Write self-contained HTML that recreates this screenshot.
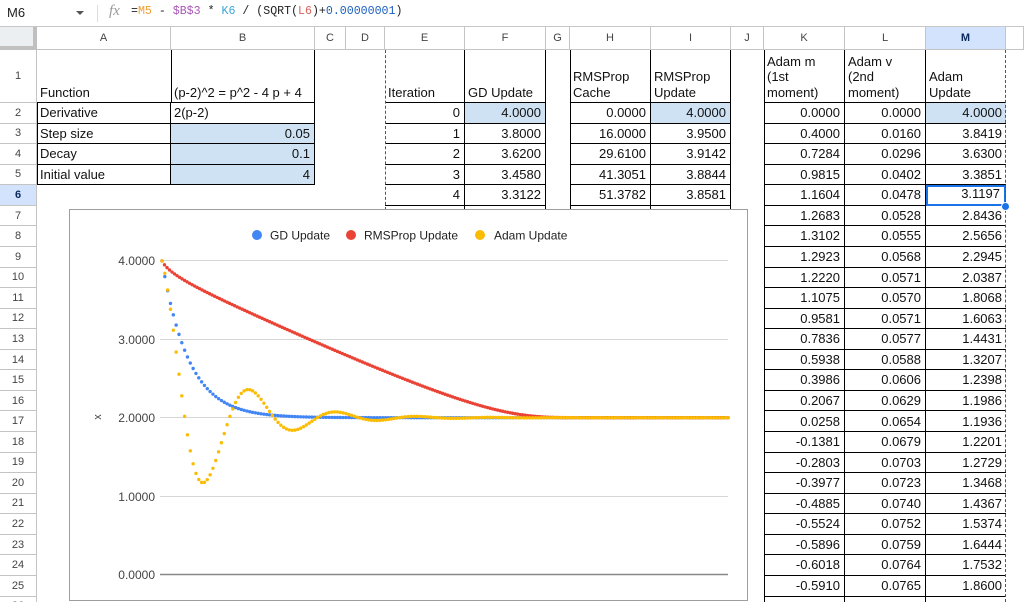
<!DOCTYPE html>
<html><head><meta charset="utf-8">
<style>
*{box-sizing:border-box;margin:0;padding:0}
html,body{width:1024px;height:602px;overflow:hidden}
body{background:#fff;font-family:"Liberation Sans",Arial,sans-serif;position:relative}
#fb{position:absolute;left:0;top:0;width:1024px;height:27px;border-bottom:1px solid #c7c7c7;background:#fff}
#g{position:absolute;left:0;top:27px;width:1024px;height:575px;overflow:hidden;display:grid;grid-template-columns:37px 134px 144px 31px 39px 80px 81px 24px 81px 80px 33px 81px 81px 80px 18px;grid-template-rows:23px 53px repeat(26,20.57px)}
.h{border-right:1px solid #c4c4c4;border-bottom:1px solid #c4c4c4;color:#444;font-size:11px;display:flex;align-items:center;justify-content:center;z-index:1;background:#fff}
.t{font-size:13px;color:#111;padding:0 3px 2px 3px;display:flex;align-items:flex-end;z-index:2;white-space:pre-line;line-height:15.5px;overflow:hidden}
.n{justify-content:flex-end;padding-right:4px}
.br{border-right:1px solid #000}.bb{border-bottom:1px solid #000}.bl{box-shadow:inset 1px 0 #000}
.bf{background:#cfe2f3}
.e{grid-column:6}.f{grid-column:7}.hh{grid-column:9}.i{grid-column:10}.k{grid-column:12}.l{grid-column:13}.m{grid-column:14}
</style></head><body>
<div id="fb">
<div style="position:absolute;left:7px;top:5px;font-size:13px;color:#222">M6</div>
<div style="position:absolute;left:76px;top:11px;width:0;height:0;border-left:4px solid transparent;border-right:4px solid transparent;border-top:4px solid #555"></div>
<div style="position:absolute;left:97px;top:5px;width:1px;height:17px;background:#ddd"></div>
<div style="position:absolute;left:109px;top:3px;font-family:'Liberation Serif',serif;font-style:italic;font-size:15px;color:#999">fx</div>
<div style="position:absolute;left:131px;top:5px;font-family:'Liberation Mono',monospace;font-size:11.6px;color:#222;white-space:pre">=<span style="color:#f0a030">M5</span> - <span style="color:#a855b5">$B$3</span> * <span style="color:#3ba7d6">K6</span> / (SQRT(<span style="color:#d8605a">L6</span>)+<span style="color:#1a5fc0">0.00000001</span>)</div>
</div>
<div id="g">
<div class="h" style="grid-area:1/1;background:#eceff1;border-right:4px solid #c0c0c0;border-bottom:4px solid #c0c0c0"></div>
<div class="h" style="grid-area:1/2">A</div><div class="h" style="grid-area:1/3">B</div><div class="h" style="grid-area:1/4">C</div><div class="h" style="grid-area:1/5">D</div><div class="h" style="grid-area:1/6">E</div><div class="h" style="grid-area:1/7">F</div><div class="h" style="grid-area:1/8">G</div><div class="h" style="grid-area:1/9">H</div><div class="h" style="grid-area:1/10">I</div><div class="h" style="grid-area:1/11">J</div><div class="h" style="grid-area:1/12">K</div><div class="h" style="grid-area:1/13">L</div><div class="h" style="grid-area:1/14;background:#d3e3fd;font-weight:bold;color:#0b2a5c">M</div><div class="h" style="grid-area:1/15"></div>
<div class="h" style="grid-area:2/1">1</div><div class="h" style="grid-area:3/1">2</div><div class="h" style="grid-area:4/1">3</div><div class="h" style="grid-area:5/1">4</div><div class="h" style="grid-area:6/1">5</div><div class="h" style="grid-area:7/1;background:#d3e3fd;font-weight:bold;color:#0b2a5c">6</div><div class="h" style="grid-area:8/1">7</div><div class="h" style="grid-area:9/1">8</div><div class="h" style="grid-area:10/1">9</div><div class="h" style="grid-area:11/1">10</div><div class="h" style="grid-area:12/1">11</div><div class="h" style="grid-area:13/1">12</div><div class="h" style="grid-area:14/1">13</div><div class="h" style="grid-area:15/1">14</div><div class="h" style="grid-area:16/1">15</div><div class="h" style="grid-area:17/1">16</div><div class="h" style="grid-area:18/1">17</div><div class="h" style="grid-area:19/1">18</div><div class="h" style="grid-area:20/1">19</div><div class="h" style="grid-area:21/1">20</div><div class="h" style="grid-area:22/1">21</div><div class="h" style="grid-area:23/1">22</div><div class="h" style="grid-area:24/1">23</div><div class="h" style="grid-area:25/1">24</div><div class="h" style="grid-area:26/1">25</div><div class="h" style="grid-area:27/1">26</div>

<div class="t bb" style="grid-area:2/2">Function</div>
<div class="t bb br bl" style="grid-area:2/3">(p-2)^2 = p^2 - 4 p + 4</div>
<div class="t bb br bl" style="grid-area:3/2">Derivative</div><div class="t bb br" style="grid-area:3/3">2(p-2)</div>
<div class="t bb br bl" style="grid-area:4/2">Step size</div><div class="t n bb br bf" style="grid-area:4/3">0.05</div>
<div class="t bb br bl" style="grid-area:5/2">Decay</div><div class="t n bb br bf" style="grid-area:5/3">0.1</div>
<div class="t bb br bl" style="grid-area:6/2">Initial value</div><div class="t n bb br bf" style="grid-area:6/3">4</div>

<div class="t e bb br" style="grid-row:2">Iteration</div><div class="t f bb br" style="grid-row:2">GD Update</div>
<div class="t hh bb br bl" style="grid-row:2">RMSProp
Cache</div><div class="t i bb br" style="grid-row:2">RMSProp
Update</div>
<div class="t k bb br bl" style="grid-row:2">Adam m
(1st
moment)</div><div class="t l bb br" style="grid-row:2">Adam v
(2nd
moment)</div><div class="t m bb" style="grid-row:2">Adam
Update</div>

<div class="t n e bb br" style="grid-row:3">0</div><div class="t n f bb br bf" style="grid-row:3">4.0000</div><div class="t n hh bb br bl" style="grid-row:3">0.0000</div><div class="t n i bb br bf" style="grid-row:3">4.0000</div>
<div class="t n e bb br" style="grid-row:4">1</div><div class="t n f bb br" style="grid-row:4">3.8000</div><div class="t n hh bb br bl" style="grid-row:4">16.0000</div><div class="t n i bb br" style="grid-row:4">3.9500</div>
<div class="t n e bb br" style="grid-row:5">2</div><div class="t n f bb br" style="grid-row:5">3.6200</div><div class="t n hh bb br bl" style="grid-row:5">29.6100</div><div class="t n i bb br" style="grid-row:5">3.9142</div>
<div class="t n e bb br" style="grid-row:6">3</div><div class="t n f bb br" style="grid-row:6">3.4580</div><div class="t n hh bb br bl" style="grid-row:6">41.3051</div><div class="t n i bb br" style="grid-row:6">3.8844</div>
<div class="t n e bb br" style="grid-row:7">4</div><div class="t n f bb br" style="grid-row:7">3.3122</div><div class="t n hh bb br bl" style="grid-row:7">51.3782</div><div class="t n i bb br" style="grid-row:7">3.8581</div>
<div class="t e bb br" style="grid-row:8"></div><div class="t f bb br" style="grid-row:8"></div><div class="t hh bb br bl" style="grid-row:8"></div><div class="t i bb br" style="grid-row:8"></div>

<div class="t n k bb br bl" style="grid-row:3">0.0000</div><div class="t n l bb br" style="grid-row:3">0.0000</div><div class="t n m bb bf" style="grid-row:3">4.0000</div>
<div class="t n k bb br bl" style="grid-row:4">0.4000</div><div class="t n l bb br" style="grid-row:4">0.0160</div><div class="t n m bb" style="grid-row:4">3.8419</div>
<div class="t n k bb br bl" style="grid-row:5">0.7284</div><div class="t n l bb br" style="grid-row:5">0.0296</div><div class="t n m bb" style="grid-row:5">3.6300</div>
<div class="t n k bb br bl" style="grid-row:6">0.9815</div><div class="t n l bb br" style="grid-row:6">0.0402</div><div class="t n m bb" style="grid-row:6">3.3851</div>
<div class="t n k bb br bl" style="grid-row:7">1.1604</div><div class="t n l bb br" style="grid-row:7">0.0478</div><div class="t n m" style="grid-row:7;border:2px solid #1a73e8">3.1197</div>
<div class="t n k bb br bl" style="grid-row:8">1.2683</div><div class="t n l bb br" style="grid-row:8">0.0528</div><div class="t n m bb" style="grid-row:8">2.8436</div>
<div class="t n k bb br bl" style="grid-row:9">1.3102</div><div class="t n l bb br" style="grid-row:9">0.0555</div><div class="t n m bb" style="grid-row:9">2.5656</div>
<div class="t n k bb br bl" style="grid-row:10">1.2923</div><div class="t n l bb br" style="grid-row:10">0.0568</div><div class="t n m bb" style="grid-row:10">2.2945</div>
<div class="t n k bb br bl" style="grid-row:11">1.2220</div><div class="t n l bb br" style="grid-row:11">0.0571</div><div class="t n m bb" style="grid-row:11">2.0387</div>
<div class="t n k bb br bl" style="grid-row:12">1.1075</div><div class="t n l bb br" style="grid-row:12">0.0570</div><div class="t n m bb" style="grid-row:12">1.8068</div>
<div class="t n k bb br bl" style="grid-row:13">0.9581</div><div class="t n l bb br" style="grid-row:13">0.0571</div><div class="t n m bb" style="grid-row:13">1.6063</div>
<div class="t n k bb br bl" style="grid-row:14">0.7836</div><div class="t n l bb br" style="grid-row:14">0.0577</div><div class="t n m bb" style="grid-row:14">1.4431</div>
<div class="t n k bb br bl" style="grid-row:15">0.5938</div><div class="t n l bb br" style="grid-row:15">0.0588</div><div class="t n m bb" style="grid-row:15">1.3207</div>
<div class="t n k bb br bl" style="grid-row:16">0.3986</div><div class="t n l bb br" style="grid-row:16">0.0606</div><div class="t n m bb" style="grid-row:16">1.2398</div>
<div class="t n k bb br bl" style="grid-row:17">0.2067</div><div class="t n l bb br" style="grid-row:17">0.0629</div><div class="t n m bb" style="grid-row:17">1.1986</div>
<div class="t n k bb br bl" style="grid-row:18">0.0258</div><div class="t n l bb br" style="grid-row:18">0.0654</div><div class="t n m bb" style="grid-row:18">1.1936</div>
<div class="t n k bb br bl" style="grid-row:19">-0.1381</div><div class="t n l bb br" style="grid-row:19">0.0679</div><div class="t n m bb" style="grid-row:19">1.2201</div>
<div class="t n k bb br bl" style="grid-row:20">-0.2803</div><div class="t n l bb br" style="grid-row:20">0.0703</div><div class="t n m bb" style="grid-row:20">1.2729</div>
<div class="t n k bb br bl" style="grid-row:21">-0.3977</div><div class="t n l bb br" style="grid-row:21">0.0723</div><div class="t n m bb" style="grid-row:21">1.3468</div>
<div class="t n k bb br bl" style="grid-row:22">-0.4885</div><div class="t n l bb br" style="grid-row:22">0.0740</div><div class="t n m bb" style="grid-row:22">1.4367</div>
<div class="t n k bb br bl" style="grid-row:23">-0.5524</div><div class="t n l bb br" style="grid-row:23">0.0752</div><div class="t n m bb" style="grid-row:23">1.5374</div>
<div class="t n k bb br bl" style="grid-row:24">-0.5896</div><div class="t n l bb br" style="grid-row:24">0.0759</div><div class="t n m bb" style="grid-row:24">1.6444</div>
<div class="t n k bb br bl" style="grid-row:25">-0.6018</div><div class="t n l bb br" style="grid-row:25">0.0764</div><div class="t n m bb" style="grid-row:25">1.7532</div>
<div class="t n k bb br bl" style="grid-row:26">-0.5910</div><div class="t n l bb br" style="grid-row:26">0.0765</div><div class="t n m bb" style="grid-row:26">1.8600</div>
<div class="t k bb br bl" style="grid-row:27"></div><div class="t l bb br" style="grid-row:27"></div><div class="t m bb" style="grid-row:27"></div>
</div>
<div style="position:absolute;left:385px;top:50px;height:160px;border-left:1px dashed #555;z-index:3"></div>
<div style="position:absolute;left:1005px;top:50px;height:552px;border-left:1px dashed #555;z-index:3"></div>
<div style="position:absolute;left:1001px;top:202px;width:9px;height:9px;border-radius:50%;background:#1a73e8;border:1px solid #fff;z-index:6"></div>

<svg id="ch" width="1024" height="602" style="position:absolute;left:0;top:0;z-index:5" font-family="Liberation Sans, Arial, sans-serif">
<rect x="69.5" y="209.5" width="678" height="391" fill="#fff" stroke="#9e9e9e"/>
<g stroke="#d6d6d6" stroke-width="1">
<line x1="160" y1="260.5" x2="728" y2="260.5"/><line x1="160" y1="339.5" x2="728" y2="339.5"/><line x1="160" y1="417.5" x2="728" y2="417.5"/><line x1="160" y1="496.5" x2="728" y2="496.5"/>
</g>
<line x1="160" y1="574.5" x2="728" y2="574.5" stroke="#888" stroke-width="1.5"/>
<g font-size="12" fill="#444" text-anchor="end">
<text x="155" y="265">4.0000</text><text x="155" y="344">3.0000</text><text x="155" y="422">2.0000</text><text x="155" y="501">1.0000</text><text x="155" y="579">0.0000</text>
</g>
<text x="98" y="417" font-size="11" fill="#444" text-anchor="middle" transform="rotate(-90 98 417)" dy="3">x</text>
<circle cx="257" cy="235" r="5" fill="#4285f4"/><text x="270" y="239.5" font-size="12" fill="#222">GD Update</text>
<circle cx="351" cy="235" r="5" fill="#ea4335"/><text x="364" y="239.5" font-size="12" fill="#222">RMSProp Update</text>
<circle cx="480" cy="235" r="5" fill="#fbbc04"/><text x="494" y="239.5" font-size="12" fill="#222">Adam Update</text>
<g id="gd" fill="#4285f4"></g><g id="rm" fill="#ea4335"></g><g id="ad" fill="#fbbc04"></g>
</svg>
<script>
(function(){
var N=200,Y=function(v){return 574.5-v*78.4};
function dots(id,arr,s,lim){var g=document.getElementById(id),o='';for(var i=0;i<arr.length;i++){var x=162+i*2.83*s;if(x>lim)break;o+='<circle cx="'+x.toFixed(2)+'" cy="'+Y(arr[i]).toFixed(2)+'" r="1.7"/>';}g.innerHTML=o;}
var a=[],x=4;for(var n=0;n<=N;n++){a.push(x);x=x-0.05*2*(x-2);}
var b=[],c=0;x=4;for(n=0;n<=260;n++){b.push(x);var gr=2*(x-2);c=0.9*c+gr*gr;x=x-0.05*gr/(Math.sqrt(c)+1e-8);}
var d=[],m=0,v=0;x=4;for(n=0;n<=N;n++){d.push(x);gr=2*(x-2);m=0.9*m+0.1*gr;v=0.99*v+0.001*gr*gr;x=x-0.05*m/(Math.sqrt(v)+1e-8);}
dots('gd',a,1,729);dots('rm',b,0.885,729);dots('ad',d,1,729);
})();
</script>
</body></html>
